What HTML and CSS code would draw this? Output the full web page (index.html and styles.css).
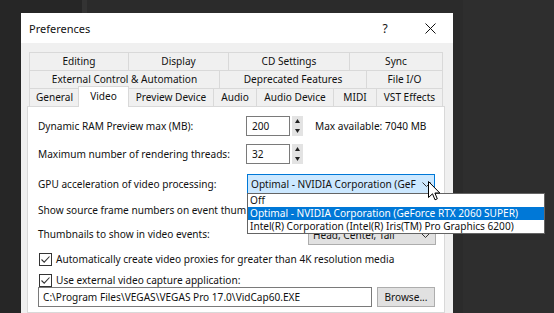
FILE: index.html
```html
<!DOCTYPE html>
<html lang="en">
<head>
    <meta charset="UTF-8">
    <title>Preferences</title>
    <link rel="stylesheet" href="styles.css">
</head>
<body>

<div class="dialog">
    <div class="titlebar">
        <span class="title">Preferences</span>
        <span class="caption-btn help">?</span>
        <span class="caption-btn close">
            <svg width="11" height="11" viewBox="0 0 11 11"><path d="M0.5 0.5 L10.5 10.5 M10.5 0.5 L0.5 10.5" stroke="#111" stroke-width="1" fill="none"/></svg>
        </span>
    </div>

    <div class="dialog-body">
        <div class="tabs">
            <div class="tab-row row-a">
                <div class="tab">Editing</div>
                <div class="tab">Display</div>
                <div class="tab">CD Settings</div>
                <div class="tab">Sync</div>
            </div>
            <div class="tab-row row-b">
                <div class="tab">External Control &amp; Automation</div>
                <div class="tab">Deprecated Features</div>
                <div class="tab">File I/O</div>
            </div>
            <div class="tab-row row-c">
                <div class="tab">General</div>
                <div class="tab active">Video</div>
                <div class="tab">Preview Device</div>
                <div class="tab">Audio</div>
                <div class="tab">Audio Device</div>
                <div class="tab">MIDI</div>
                <div class="tab">VST Effects</div>
            </div>
        </div>

        <div class="panel">
            <div class="row row-spin">
                <span class="label">Dynamic RAM Preview max (MB):</span>
                <span class="edit spin-edit">200</span>
                <span class="spinner">
                    <svg width="9" height="18" viewBox="0 0 9 18"><path d="M2 6 L4.5 2 L7 6 Z M2 12 L4.5 16 L7 12 Z" fill="#222"/></svg>
                </span>
                <span class="note">Max available: 7040 MB</span>
            </div>
            <div class="row row-spin second">
                <span class="label">Maximum number of rendering threads:</span>
                <span class="edit spin-edit">32</span>
                <span class="spinner">
                    <svg width="9" height="18" viewBox="0 0 9 18"><path d="M2 6 L4.5 2 L7 6 Z M2 12 L4.5 16 L7 12 Z" fill="#222"/></svg>
                </span>
            </div>
            <div class="row row-gpu">
                <span class="label">GPU acceleration of video processing:</span>
                <div class="combo-wrap">
                    <div class="combo combo-open">
                        <span class="combo-text">Optimal - NVIDIA Corporation (GeF</span>
                        <svg class="chevron" width="9" height="5" viewBox="0 0 9 5"><path d="M0.5 0.5 L4.5 4.5 L8.5 0.5" stroke="#333" fill="none"/></svg>
                    </div>
                    <div class="drop-list">
                        <div class="drop-item">Off</div>
                        <div class="drop-item selected">Optimal - NVIDIA Corporation (GeForce RTX 2060 SUPER)</div>
                        <div class="drop-item">Intel(R) Corporation (Intel(R) Iris(TM) Pro Graphics 6200)</div>
                    </div>
                    <svg class="cursor" width="13" height="20" viewBox="0 0 13 20">
                        <path d="M0.5 0.5 V16.5 L4.5 12.8 L7 18.8 L9.3 17.8 L6.9 12 H11.8 Z" fill="#fff" stroke="#000" stroke-width="1" stroke-linejoin="miter"/>
                    </svg>
                </div>
            </div>
            <div class="row row-frames">
                <span class="label clipped">Show source frame numbers on event thumbnails</span>
            </div>
            <div class="row row-thumbs">
                <span class="label raised">Thumbnails to show in video events:</span>
                <div class="combo combo-thumbs">
                    <span class="combo-text">Head, Center, Tail</span>
                    <svg class="chevron" width="9" height="5" viewBox="0 0 9 5"><path d="M0.5 0.5 L4.5 4.5 L8.5 0.5" stroke="#333" fill="none"/></svg>
                </div>
            </div>
            <div class="row row-check">
                <span class="checkbox">
                    <svg width="11" height="11" viewBox="0 0 11 11"><path d="M1.5 5.5 L4.2 8.2 L9.5 2.5" stroke="#333" stroke-width="1.1" fill="none"/></svg>
                </span>
                <span>Automatically create video proxies for greater than 4K resolution media</span>
            </div>
            <div class="row row-check">
                <span class="checkbox">
                    <svg width="11" height="11" viewBox="0 0 11 11"><path d="M1.5 5.5 L4.2 8.2 L9.5 2.5" stroke="#333" stroke-width="1.1" fill="none"/></svg>
                </span>
                <span>Use external video capture application:</span>
            </div>
            <div class="row row-path">
                <span class="edit path-edit">C:\Program Files\VEGAS\VEGAS Pro 17.0\VidCap60.EXE</span>
                <span class="button">Browse...</span>
            </div>
        </div>
    </div>
</div>

</body>
</html>
```

FILE: styles.css
```css
html, body {
    margin: 0;
}
body {
    height: 313px;
    overflow: hidden;
    box-sizing: border-box;
    padding: 13px 0 0 21px;
    font-family: "Noto Sans", "Open Sans", sans-serif;
    font-size: 10.1px;
    color: #111;
    background: linear-gradient(to right, #262626 0 82px, #333 82px 87px, #2b2b2b 87px 463px, #2e2e2e 463px);
}
.dialog {
    width: 432px;
    height: 300px;
    background: #f0f0f0;
}
.titlebar {
    height: 30px;
    background: #fff;
    display: flex;
    align-items: center;
    padding-left: 8px;
}
.title {
    flex: 1;
    font-size: 11px;
}
.caption-btn {
    height: 30px;
    display: flex;
    align-items: center;
    justify-content: center;
}
.help {
    width: 44px;
    font-size: 12px;
}
.close {
    width: 46px;
}
.dialog-body {
    padding: 9px 8px 0 6px;
}
.tabs {
    width: 414px;
    margin-left: 2px;
}
.tab-row {
    display: grid;
    height: 18px;
}
.row-a {
    grid-template-columns: 99px 100px 121px 94px;
}
.row-b {
    grid-template-columns: 190px 147px 77px;
}
.row-c {
    grid-template-columns: 50px 49px 85px 43px 77px 43px 67px;
}
.tab {
    border-top: 1px solid #d9d9d9;
    border-left: 1px solid #d9d9d9;
    background: #f0f0f0;
    text-align: center;
    line-height: 17px;
    white-space: nowrap;
}
.tab:last-child {
    border-right: 1px solid #d9d9d9;
}
.tab.active {
    position: relative;
    z-index: 1;
    background: #fff;
    margin: -2px -1px -1px -1px;
    border-right: 1px solid #d9d9d9;
    line-height: 18px;
}
.panel {
    width: 418px;
    height: 207px;
    box-sizing: border-box;
    background: #fff;
    border: 1px solid #d9d9d9;
    padding: 9px 0 0 10px;
}
.row {
    display: flex;
    align-items: center;
    white-space: nowrap;
}
.label {
    width: 208px;
    flex: none;
}
.label.clipped {
    overflow: hidden;
}
.label.raised {
    margin-bottom: 3px;
}
.row-spin {
    height: 20px;
}
.row-spin.second {
    margin-top: 8px;
}
.edit {
    box-sizing: border-box;
    height: 20px;
    border: 1px solid #7a7a7a;
    background: #fff;
    display: flex;
    align-items: center;
}
.spin-edit {
    width: 44px;
    padding-left: 5px;
}
.spinner {
    width: 11px;
    height: 20px;
    margin-left: 2px;
    background: #e3e3e3;
    display: flex;
    align-items: center;
    justify-content: center;
}
.note {
    margin-left: 12px;
}
.row-gpu {
    margin-top: 10px;
    height: 20px;
}
.combo-wrap {
    position: relative;
    margin-left: 1px;
}
.combo {
    box-sizing: border-box;
    height: 20px;
    display: flex;
    align-items: center;
    justify-content: space-between;
}
.combo-open {
    width: 188px;
    background: #cce8ff;
    border: 1px solid #0078d7;
    padding: 0 1px 0 3px;
}
.chevron {
    flex: none;
    margin-right: 2px;
}
.drop-list {
    position: absolute;
    z-index: 2;
    top: 19px;
    left: 0;
    width: 298px;
    box-sizing: border-box;
    background: #fff;
    border: 1px solid #646464;
}
.drop-item {
    height: 13px;
    line-height: 13px;
    padding-left: 2px;
}
.drop-item.selected {
    background: #0078d7;
    color: #fff;
}
.cursor {
    position: absolute;
    z-index: 3;
    left: 181px;
    top: 7px;
}
.row-frames {
    height: 31px;
}
.row-thumbs {
    height: 20px;
}
.combo-thumbs {
    width: 128px;
    margin-left: 62px;
    background: #e1e1e1;
    border: 1px solid #adadad;
    padding: 0 3px 0 4px;
}
.row-check {
    height: 14px;
    margin-top: 7px;
}
.checkbox {
    box-sizing: border-box;
    width: 13px;
    height: 13px;
    margin: 0 4px 0 1px;
    border: 1px solid #333;
    background: #fff;
    display: flex;
    align-items: center;
    justify-content: center;
}
.row-path {
    height: 20px;
}
.path-edit {
    width: 334px;
    padding-left: 4px;
}
.button {
    box-sizing: border-box;
    width: 58px;
    height: 20px;
    margin-left: 5px;
    background: #e1e1e1;
    border: 1px solid #adadad;
    display: flex;
    align-items: center;
    justify-content: center;
}
```
